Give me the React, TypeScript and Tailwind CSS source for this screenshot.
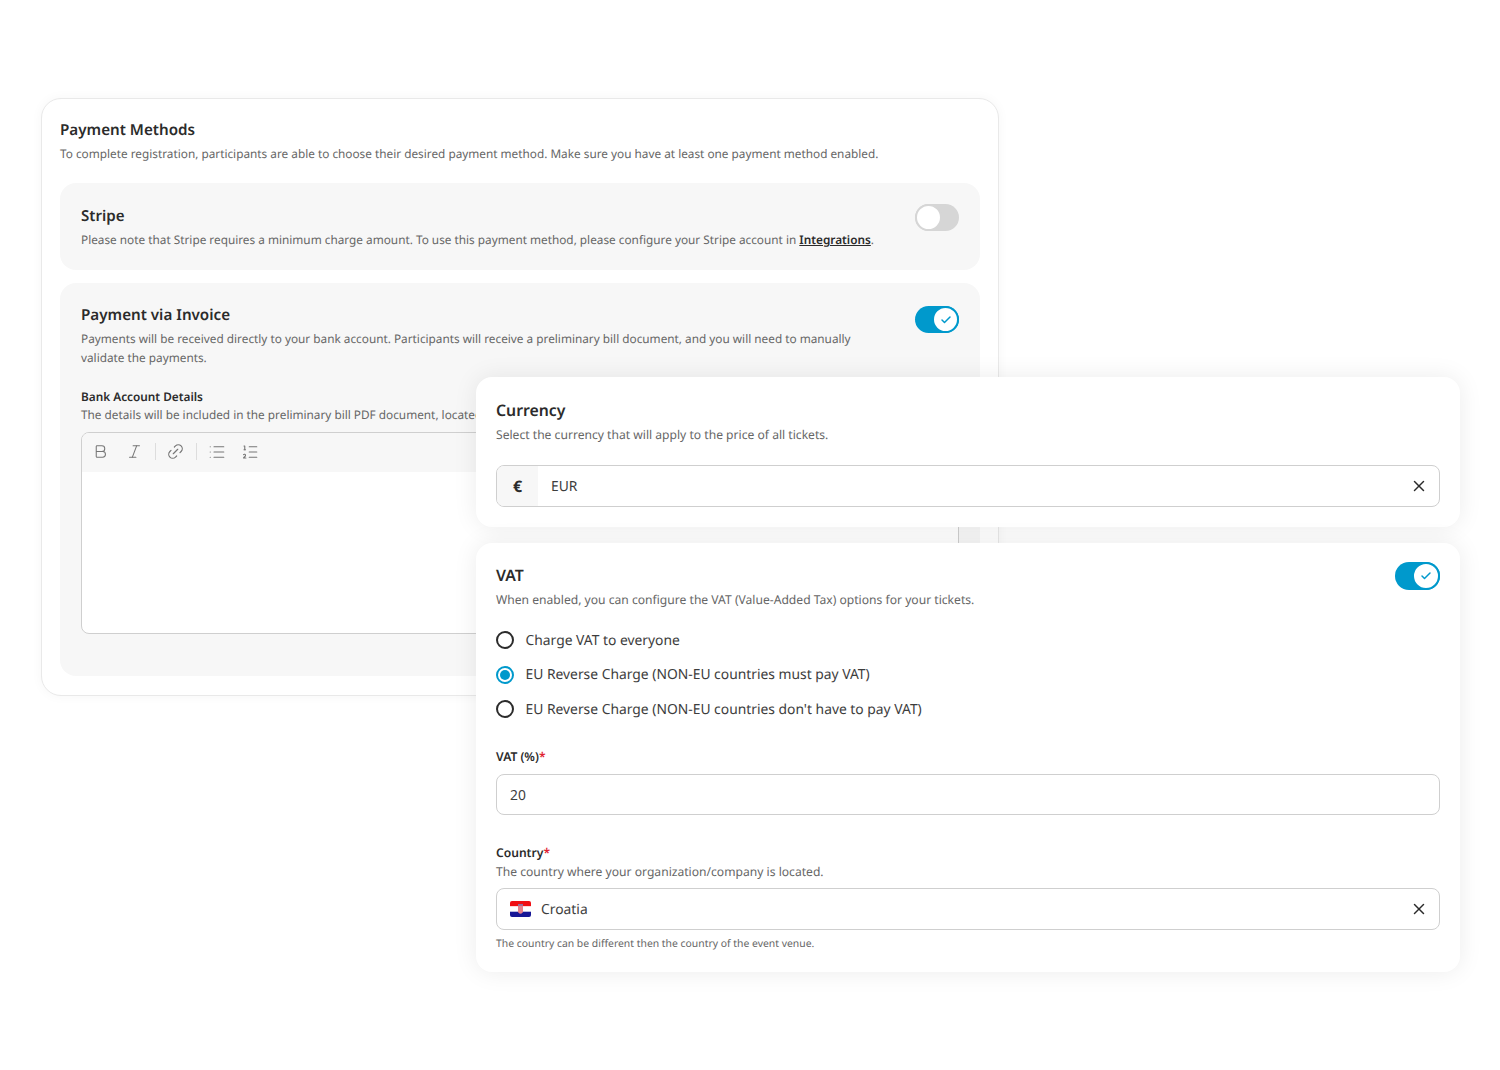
import React from 'react';
import { Bold, Italic, Link2, List, ListOrdered, X, Check } from 'lucide-react';

function Toggle({ on, small }: { on: boolean; small?: boolean }) {
  const track = small ? 'w-[44px] h-[27px]' : 'w-[45px] h-[28px]';
  const thumb = small ? 'w-[27px] h-[27px]' : 'w-[28px] h-[28px]';
  if (!on) {
    return (
      <div className={`${track} rounded-full bg-[#d6d6d6] flex items-center shrink-0`}>
        <div className={`${thumb} rounded-full bg-white border-2 border-[#d6d6d6]`}></div>
      </div>
    );
  }
  return (
    <div className={`${track} rounded-full bg-[#0099cc] flex items-center justify-end shrink-0`}>
      <div className={`${thumb} rounded-full bg-white border-2 border-[#0099cc] flex items-center justify-center`}>
        <Check size={12} strokeWidth={3} className="text-[#0099cc]" />
      </div>
    </div>
  );
}

function Radio({ on, label }: { on?: boolean; label: string }) {
  return (
    <div className="flex items-center gap-[11.5px] h-[20px]">
      {on ? (
        <div className="w-[18px] h-[18px] rounded-full border-2 border-[#0099cc] flex items-center justify-center">
          <div className="w-[10px] h-[10px] rounded-full bg-[#0099cc]"></div>
        </div>
      ) : (
        <div className="w-[18px] h-[18px] rounded-full border-2 border-[#2b2b2b]"></div>
      )}
      <span className="pt-[2px] text-[13.85px] text-[#3d3d3d]">{label}</span>
    </div>
  );
}

function Flag() {
  return (
    <svg width="21" height="16" viewBox="0 0 21 16" className="shrink-0">
      <defs>
        <clipPath id="hr">
          <rect width="21" height="16" rx="2" />
        </clipPath>
      </defs>
      <g clipPath="url(#hr)">
        <rect width="21" height="5.4" fill="#f00f14" />
        <rect y="5.4" width="21" height="5.3" fill="#ffffff" />
        <rect y="10.7" width="21" height="5.3" fill="#171796" />
        <path d="M8 4.500h5v5.700c0 1.400-1.100 2.300-2.500 2.600C9.100 12.500 8 11.600 8 10.200z" fill="#e8808a" />
        <path d="M8 3.300h5v1.200H8z" fill="#6f8fd0" />
      </g>
    </svg>
  );
}

export default function App() {
  return (
    <div className="relative w-[1500px] h-[1070px] bg-white overflow-hidden font-['Noto_Sans',sans-serif] [text-rendering:geometricPrecision]">
      {/* back card */}
      <div className="absolute left-[41px] top-[98px] w-[958px] h-[598px] rounded-[20px] border border-[#e9e9e9] bg-white px-[18px] pt-[20px] shadow-[0_0_12px_rgba(0,0,0,0.04)]">
        <h2 className="text-[15.2px] leading-[22px] font-semibold text-[#2b2b2b]">Payment Methods</h2>
        <p className="text-[11.8px] leading-[18px] mt-[4px] text-[#666666]">
          To complete registration, participants are able to choose their desired payment method. Make sure you have at least one payment method enabled.
        </p>

        <div className="mt-[20px] h-[87px] rounded-[16px] bg-[#f7f7f7] pl-[21px] pr-[21px] pt-[23px] flex justify-between">
          <div>
            <h3 className="text-[15.1px] leading-[21px] font-semibold text-[#2b2b2b]">Stripe</h3>
            <p className="text-[11.8px] leading-[18px] mt-[4px] text-[#666666]">
              Please note that Stripe requires a minimum charge amount. To use this payment method, please configure your Stripe account in{' '}
              <span className="font-semibold text-[#2b2b2b] underline">Integrations</span>.
            </p>
          </div>
          <div className="-mt-[2px]">
            <Toggle on={false} small />
          </div>
        </div>

        <div className="mt-[13px] h-[393px] rounded-[16px] bg-[#f7f7f7] pl-[21px] pr-[21px] pt-[22px]">
          <div className="flex justify-between">
            <div className="w-[790px]">
              <h3 className="text-[15.2px] leading-[21px] font-semibold text-[#2b2b2b]">Payment via Invoice</h3>
              <p className="text-[11.8px] leading-[19px] mt-[4px] text-[#666666]">
                Payments will be received directly to your bank account. Participants will receive a preliminary bill document, and you will need to manually validate the payments.
              </p>
            </div>
            <div className="mt-[1px]">
              <Toggle on={true} small />
            </div>
          </div>
          <h4 className="mt-[20px] text-[11.8px] leading-[18px] font-semibold text-[#2b2b2b]">Bank Account Details</h4>
          <p className="text-[11.8px] leading-[18px] mt-[0px] text-[#666666] whitespace-nowrap">
            The details will be included in the preliminary bill PDF document, located in the participant profile.
          </p>
          <div className="mt-[8px] h-[202px] rounded-[8px] border border-[#cfcfcf] bg-white overflow-hidden">
            <div className="h-[39px] pb-[2px] bg-[#f7f7f7] flex items-center pl-[10px] text-[#777777]">
              <Bold size={17} strokeWidth={1.5} />
              <Italic size={17} strokeWidth={1.5} className="ml-[17px]" />
              <div className="w-px h-[17px] bg-[#dddddd] ml-[12px]"></div>
              <Link2 size={19} strokeWidth={1.5} className="ml-[10px] -rotate-45" />
              <div className="w-px h-[17px] bg-[#dddddd] ml-[11px]"></div>
              <List size={18} strokeWidth={1.5} className="ml-[11px]" />
              <ListOrdered size={18} strokeWidth={1.5} className="ml-[15px]" />
            </div>
          </div>
        </div>
      </div>

      {/* currency card */}
      <div className="absolute left-[476px] top-[377px] w-[984px] h-[150px] rounded-[16px] bg-white px-[20px] pt-[22px] shadow-[0_0_24px_rgba(0,0,0,0.08)]">
        <h2 className="text-[15.8px] leading-[22px] font-semibold text-[#2b2b2b]">Currency</h2>
        <p className="text-[12.12px] leading-[18px] mt-[5px] text-[#666666]">Select the currency that will apply to the price of all tickets.</p>
        <div className="mt-[21px] h-[42px] rounded-[8px] border border-[#cfcfcf] flex items-center overflow-hidden">
          <div className="w-[41px] h-full bg-[#f7f7f7] flex items-center justify-center text-[16px] font-bold text-[#2b2b2b]">€</div>
          <span className="ml-[13px] pt-[2px] text-[13.85px] text-[#3d3d3d]">EUR</span>
          <X size={18} strokeWidth={2} className="ml-auto mr-[11px] text-[#2b2b2b]" />
        </div>
      </div>

      {/* vat card */}
      <div className="absolute left-[476px] top-[543px] w-[984px] h-[429px] rounded-[16px] bg-white px-[20px] pt-[21px] shadow-[0_0_24px_rgba(0,0,0,0.08)]">
        <div className="flex justify-between">
          <div>
            <h2 className="text-[15.8px] leading-[22px] font-semibold text-[#2b2b2b]">VAT</h2>
            <p className="text-[12.12px] leading-[18px] mt-[5px] text-[#666666]">When enabled, you can configure the VAT (Value-Added Tax) options for your tickets.</p>
          </div>
          <div className="-mt-[2px]">
            <Toggle on={true} />
          </div>
        </div>
        <div className="mt-[21px] flex flex-col gap-[14.5px]">
          <Radio label="Charge VAT to everyone" />
          <Radio on label="EU Reverse Charge (NON-EU countries must pay VAT)" />
          <Radio label="EU Reverse Charge (NON-EU countries don't have to pay VAT)" />
        </div>
        <div className="mt-[29px] text-[12.1px] leading-[18px] font-semibold text-[#2b2b2b]">
          VAT (%)<span className="text-[#e0202f]">*</span>
        </div>
        <div className="mt-[8px] h-[41px] pt-[3px] rounded-[8px] border border-[#cfcfcf] flex items-center pl-[13px] text-[13.85px] text-[#3d3d3d]">20</div>
        <div className="mt-[29px] text-[12.1px] leading-[18px] font-semibold text-[#2b2b2b]">
          Country<span className="text-[#e0202f]">*</span>
        </div>
        <p className="text-[12.12px] leading-[18px] mt-[1px] text-[#666666]">The country where your organization/company is located.</p>
        <div className="mt-[7px] h-[42px] rounded-[8px] border border-[#cfcfcf] flex items-center pl-[13px]">
          <Flag />
          <span className="ml-[10px] pt-[2px] text-[13.85px] text-[#3d3d3d]">Croatia</span>
          <X size={18} strokeWidth={2} className="ml-auto mr-[11px] text-[#2b2b2b]" />
        </div>
        <p className="mt-[6px] text-[10.4px] leading-[16px] text-[#666666]">The country can be different then the country of the event venue.</p>
      </div>
    </div>
  );
}
